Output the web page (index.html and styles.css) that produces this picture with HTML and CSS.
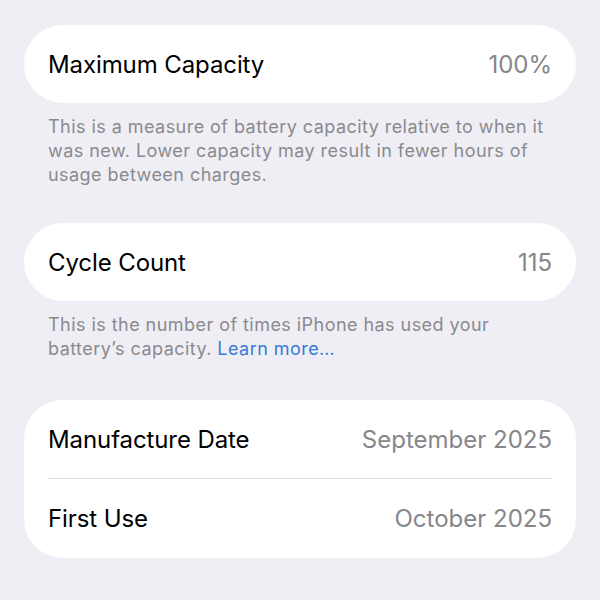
FILE: index.html
```html
<!DOCTYPE html>
<html lang="en">
<head>
<meta charset="utf-8">
<title>Battery Health</title>
<link rel="stylesheet" href="styles.css">
</head>
<body>
<main class="page">
  <section class="group">
    <div class="card">
      <div class="row"><span class="label">Maximum Capacity</span><span class="value">100%</span></div>
    </div>
    <p class="footer">This is a measure of battery capacity relative to when it was new. Lower capacity may result in fewer hours of usage between charges.</p>
  </section>
  <section class="group group-wide">
    <div class="card">
      <div class="row"><span class="label">Cycle Count</span><span class="value">115</span></div>
    </div>
    <p class="footer">This is the number of times iPhone has used your battery’s capacity. <a class="link" href="#">Learn more…</a></p>
  </section>
  <section class="group">
    <div class="card">
      <div class="row"><span class="label">Manufacture Date</span><span class="value">September 2025</span></div>
      <div class="divider"></div>
      <div class="row row-last"><span class="label">First Use</span><span class="value">October 2025</span></div>
    </div>
  </section>
</main>
</body>
</html>
```
FILE: styles.css
```css
html, body {
  margin: 0;
  padding: 0;
  background: #efeef4;
}
body {
  font-family: Inter, "Noto Sans", "Liberation Sans", sans-serif;
  -webkit-font-smoothing: antialiased;
}
.page {
  padding: 25px 24px 0 24px;
  display: flex;
  flex-direction: column;
}
.group {
  margin-bottom: 36px;
}
.group-wide {
  margin-bottom: 39px;
}
.card {
  background: #ffffff;
  border-radius: 39px;
  padding: 0 24px;
}
.row {
  height: 78px;
  display: flex;
  align-items: center;
  justify-content: space-between;
}
.row-last {
  height: 79px;
}
.label {
  font-size: 24px;
  color: #000000;
  letter-spacing: -0.1px;
}
.value {
  font-size: 24px;
  color: #86868b;
  letter-spacing: 0;
}
.divider {
  height: 1px;
  background: #e2e2e6;
}
.footer {
  margin: 12px 0 0 0;
  padding: 0 24px;
  font-size: 18px;
  line-height: 24px;
  letter-spacing: 0.45px;
  color: #8a8a8e;
}
.link {
  color: #3a7bd5;
  text-decoration: none;
}
```
